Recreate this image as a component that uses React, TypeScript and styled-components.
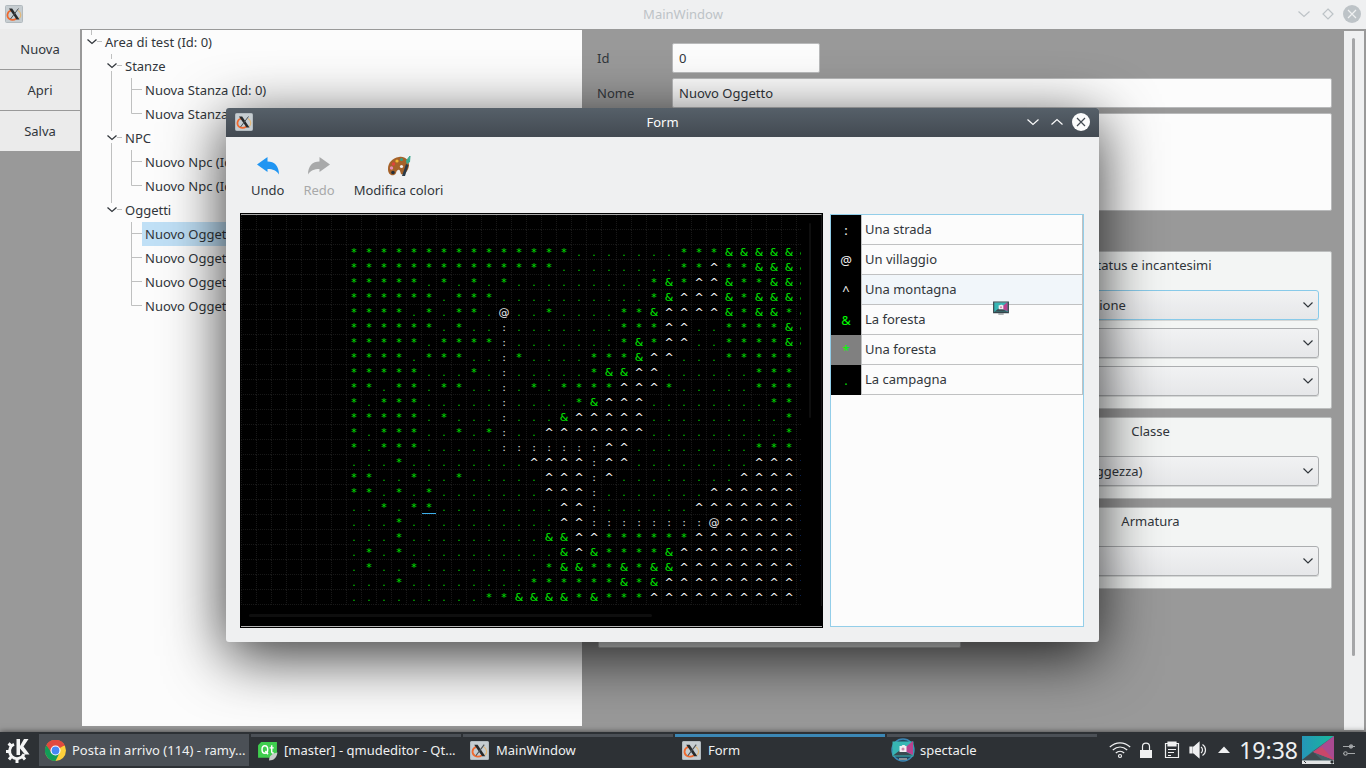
import React from "react";
import styled, { createGlobalStyle, css } from "styled-components";

const GlobalStyle = createGlobalStyle`
  * { box-sizing: border-box; }
  body {
    margin: 0;
    background: #999999;
    color: #31363b;
    font-family: "Noto Sans", sans-serif;
    font-size: 13px;
    line-height: 18px;
  }
  button, input, select, textarea { font: inherit; color: inherit; }
  button { padding: 0; border: 0; background: none; }
`;

const Desktop = styled.div`
  position: relative;
  display: flex;
  flex-direction: column;
  height: 100vh;
  min-height: 700px;
  overflow: hidden;
`;

/* ---------- window frames ---------- */

const TitleBar = styled.header<{ $active?: boolean }>`
  display: grid;
  grid-template-columns: 84px 1fr 84px;
  align-items: center;
  flex: none;
  height: 29px;
  padding: 0 4px 1px;
  color: #bdc3c7;
  background: #eff0f1;
  ${(p) =>
    p.$active &&
    css`
      color: #fcfcfc;
      background: linear-gradient(#566069, #434a52);
      border-radius: 3px 3px 0 0;
    `}
`;

const Title = styled.h1`
  margin: 0;
  font: inherit;
  text-align: center;
`;

const AppIcon = styled.span<{ $active?: boolean }>`
  display: flex;
  padding-left: ${(p) => (p.$active ? 5 : 1)}px;
`;

const WindowButtons = styled.div<{ $active?: boolean }>`
  display: flex;
  justify-content: flex-end;
  align-items: center;
  gap: 6px;
  padding-right: ${(p) => (p.$active ? 5 : 1)}px;
`;

const WindowButton = styled.button`
  display: flex;
  width: 18px;
  height: 18px;
`;

const MainBody = styled.main`
  display: grid;
  grid-template-columns: 82px minmax(0, 500fr) minmax(0, 762fr) 20px;
  flex: 1;
  min-height: 0;
  padding-right: 2px;
  background: #999999;
`;

const SideBar = styled.nav`
  display: flex;
  flex-direction: column;
  gap: 1px;
  padding-right: 2px;
`;

const SideButton = styled.button`
  height: 40px;
  background: #ebebeb;
`;

/* ---------- tree ---------- */

const Tree = styled.ul`
  margin: 1px 0 6px;
  padding: 0;
  list-style: none;
  background: #fcfcfc;
`;

const TreeRow = styled.li`
  display: flex;
  height: 24px;
`;

const TreeLabel = styled.span<{ $selected?: boolean }>`
  flex: 1;
  padding: 3px;
  white-space: nowrap;
  background: ${(p) => (p.$selected ? "#c0e0f6" : "transparent")};
`;

/* ---------- form ---------- */

const FormArea = styled.form`
  padding: 14px 12px 0 15px;
`;

const Field = styled.div`
  display: grid;
  grid-template-columns: 75px 1fr;
  align-items: center;
  margin-bottom: 5px;
`;

const TextInput = styled.input<{ $width?: string }>`
  width: ${(p) => p.$width ?? "100%"};
  height: 30px;
  padding: 0 6px;
  border: 1px solid #b9babb;
  border-radius: 2px;
  background: #fcfcfc;
`;

const TextArea = styled.textarea`
  display: block;
  width: 100%;
  height: 98px;
  border: 1px solid #b9babb;
  border-radius: 2px;
  background: #fcfcfc;
  resize: none;
`;

const Groups = styled.div`
  display: grid;
  grid-template-columns: 1fr 1fr;
  gap: 8px;
  margin: 40px 0 0 1px;
`;

const GroupColumn = styled.div`
  display: flex;
  flex-direction: column;
  gap: 8px;
`;

const Group = styled.section<{ $height?: number }>`
  display: flex;
  flex-direction: column;
  gap: 8px;
  min-height: ${(p) => p.$height ?? 0}px;
  padding: 4px 12px 12px;
  border: 1px solid #bcbebe;
  border-radius: 2px;
  background: #f3f5f4;
`;

const GroupTitle = styled.h2`
  margin: 0 0 8px;
  font: inherit;
  text-align: center;
`;

const ComboWrap = styled.div`
  display: grid;
  align-items: center;
  justify-items: end;
  > * { grid-area: 1 / 1; }
  > svg { margin-right: 4px; pointer-events: none; }
`;

const Combo = styled.select<{ $focus?: boolean }>`
  appearance: none;
  width: 100%;
  height: 30px;
  padding: 0 24px 0 7px;
  border: 1px solid ${(p) => (p.$focus ? "#88cae9" : "#acaeb0")};
  border-radius: 3px;
  background: linear-gradient(#f1f2f3, #e6e7e9);
  box-shadow: 0 1px 0 rgba(0, 0, 0, 0.12);
`;

const ScrollTrack = styled.div`
  margin: 2px 0;
  padding: 7px 9px 74px 8px;
  background: #eff0f1;
`;

const ScrollThumb = styled.div`
  height: 100%;
  border-radius: 2px;
  background: #a5a6a8;
`;

/* ---------- dialog ---------- */

const Dialog = styled.section`
  position: absolute;
  left: 226px;
  top: 108px;
  width: 873px;
  border-radius: 3px;
  background: #eff0f1;
  box-shadow: 0 14px 60px rgba(0, 0, 0, 0.8);
`;

const ToolBar = styled.div`
  display: flex;
  align-items: flex-start;
  gap: 9px;
  height: 76px;
  padding: 17px 20px 0;
`;

const ToolButton = styled.button`
  display: flex;
  flex-direction: column;
  align-items: center;
  gap: 3px;
  padding: 0 5px;
  &:disabled { color: #a8a9aa; }
`;

const DialogBody = styled.div`
  display: grid;
  grid-template-columns: minmax(0, 583fr) minmax(0, 254fr);
  gap: 7px;
  padding: 0 15px 14px 14px;
`;

const MapPanel = styled.div`
  display: grid;
  grid-template-columns: 1fr 21px;
  grid-template-rows: 392px 21px;
  padding: 1px;
  background: #000000;
`;

const MapView = styled.div`
  overflow: hidden;
  border-top: 1px solid #a9a9a9;
`;

const MapRow = styled.div`
  display: flex;
  height: 15px;
`;

const glyphColors: Record<string, string> = {
  "*": "#00e000",
  "&": "#00eb00",
  ".": "#00c800",
  ":": "#e0e0e0",
  "@": "#f0f0f0",
  "^": "#ffffff",
};

const MapCell = styled.span<{ $glyph: string; $current?: boolean }>`
  flex: none;
  width: 15px;
  height: 15px;
  border-left: 1px dotted #181818;
  border-bottom: 1px dotted #181818;
  color: ${(p) => glyphColors[p.$glyph] ?? "transparent"};
  font-family: "DejaVu Sans", sans-serif;
  font-size: 11px;
  line-height: 15px;
  text-align: center;
  box-shadow: ${(p) => (p.$current ? "inset 0 -1px #3daee9" : "none")};
`;

const MapVScroll = styled.div`
  padding: 8px 10px 0 8px;
  border-top: 1px solid #a9a9a9;
  border-right: 1px solid #161616;
  &::before {
    content: "";
    display: block;
    height: 51%;
    border-radius: 2px;
    background: #0e0e0e;
  }
`;

const MapHScroll = styled.div`
  grid-column: 1 / 3;
  padding: 8px 170px 0 8px;
  border-bottom: 1px solid #b4b4b4;
  &::before {
    content: "";
    display: block;
    height: 3px;
    border-radius: 2px;
    background: #0e0e0e;
  }
`;

const LegendPanel = styled.div`
  margin: 1px 0;
  border: 1px solid #93cee9;
  background: #fcfcfc;
`;

const LegendTable = styled.table`
  width: 100%;
  border-collapse: separate;
  border-spacing: 0;
`;

const LegendSymbol = styled.th<{ $glyph: string; $selected?: boolean }>`
  width: 30px;
  height: 30px;
  padding: 0;
  font-weight: 400;
  color: ${(p) => (p.$glyph === "." ? "#00d200" : "*&".includes(p.$glyph) ? "#00ff00" : "#f0f0f0")};
  background: ${(p) => (p.$selected ? "#808080" : "#000000")};
`;

const LegendName = styled.td<{ $hover?: boolean }>`
  height: 30px;
  padding: 0 3px 2px;
  border: solid #c0c1c2;
  border-width: 0 1px 1px;
  background: ${(p) => (p.$hover ? "#f1f6fa" : "#fcfcfc")};
`;

const DragCursor = styled.span`
  position: absolute;
  left: 767px;
  top: 192px;
  display: flex;
`;

/* ---------- task bar ---------- */

const TaskBar = styled.footer`
  display: flex;
  align-items: stretch;
  flex: none;
  height: 36px;
  padding: 2px 6px 2px 4px;
  color: #eff0f1;
  background: #2d3135;
  box-shadow: 0 0 6px rgba(0, 0, 0, 0.6);
`;

const Launcher = styled.button`
  display: flex;
  align-items: center;
  width: 35px;
`;

const TaskList = styled.div`
  display: flex;
  flex: 1;
  gap: 2px;
  min-width: 0;
`;

const Task = styled.button<{ $state?: "attention" | "active" }>`
  display: grid;
  grid-template-columns: 22px minmax(0, 1fr);
  align-items: center;
  flex: 0 1 210px;
  gap: 6px;
  min-width: 0;
  padding-left: 5px;
  border-top: 3px solid ${(p) => (p.$state === "active" ? "#3b87b5" : "#4b5056")};
  border-bottom: 3px solid transparent;
  text-align: left;
  background: ${(p) => (p.$state === "attention" ? "#4b5056" : "transparent")};
  > svg { justify-self: center; }
  > span {
    overflow: hidden;
    white-space: nowrap;
  }
`;

const Tray = styled.div`
  display: flex;
  align-items: center;
  gap: 4px;
  > svg, > button { flex: none; }
`;

const TrayButton = styled.button`
  display: flex;
  width: 22px;
  height: 22px;
`;

const Clock = styled.time`
  font-size: 23px;
  line-height: 32px;
`;

/* ---------- icons ---------- */

const XIcon = ({ size = 18 }: { size?: number }) => (
  <svg width={size} height={size} viewBox="0 0 18 18">
    <rect x="0.5" y="0.5" width="17" height="17" rx="1" fill="#c6cdd1" stroke="#b2babf" />
    <path d="M6 5.500C1.500 7 1.500 12 4.500 14c2 1.200 5 .8 7-.5" fill="none" stroke="#f0692e" strokeWidth="1.700" />
    <path d="M13 5.500c3.500 2 3.500 6.500 1 8" fill="none" stroke="#e3b878" strokeWidth="1.200" />
    <path d="M4 3.500h3.200l7.300 11h-3z" fill="#26292b" />
    <path d="M13.500 3.500L5.500 14" stroke="#4a4f52" strokeWidth="1" />
  </svg>
);

const Chevron = ({ up, color = "#31363b", size = 18 }: { up?: boolean; color?: string; size?: number }) => (
  <svg width={size} height={size} viewBox="0 0 18 18" fill="none" stroke={color} strokeWidth="1.200">
    <path d={up ? "M3.500 11.500l5.500-5 5.500 5" : "M3.500 6.500l5.500 5 5.500-5"} />
  </svg>
);

const ComboArrow = () => (
  <svg width="14" height="14" viewBox="0 0 14 14" fill="none" stroke="#31363b" strokeWidth="1.200">
    <path d="M2.500 4.500l4.500 4.500 4.500-4.500" />
  </svg>
);

const CloseIcon = ({ fill, stroke }: { fill: string; stroke: string }) => (
  <svg width="18" height="18" viewBox="0 0 18 18">
    <circle cx="9" cy="9" r="9" fill={fill} />
    <path d="M5 5l8 8M13 5l-8 8" stroke={stroke} strokeWidth="1.200" />
  </svg>
);

const Diamond = () => (
  <svg width="18" height="18" viewBox="0 0 18 18" fill="none" stroke="#bdc3c7" strokeWidth="1.200">
    <path d="M9 4l5 5-5 5-5-5z" />
  </svg>
);

type BranchKind = "root" | "node" | "lastNode" | "leaf" | "lastLeaf" | "through" | "blank";

const BranchSvg = styled.svg`
  flex: none;
`;

const Branch = ({ kind }: { kind: BranchKind }) => {
  const isNode = kind === "root" || kind === "node" || kind === "lastNode";
  return (
    <BranchSvg width="20" height="24" viewBox="0 0 20 24" fill="none" stroke="#bfc0c0">
      {isNode && <path d="M9.500 0v5M15 11.500h5" />}
      {kind === "node" && <path d="M9.500 17v7" />}
      {kind === "through" && <path d="M9.500 0v24" />}
      {kind === "leaf" && <path d="M9.500 0v24M10 11.500h10" />}
      {kind === "lastLeaf" && <path d="M9.500 0v11.500h10.500" />}
      {isNode && <path d="M5.500 9.500l4.500 4 4.500-4" stroke="#31363b" strokeWidth="1.300" />}
    </BranchSvg>
  );
};

const UndoIcon = ({ color, flip }: { color: string; flip?: boolean }) => (
  <svg width="24" height="24" viewBox="0 0 24 24">
    <path
      transform={flip ? "translate(24 0) scale(-1 1)" : undefined}
      d="M1 10.500L11.500 3v4.500C18.500 7.500 23 12 23 20.500c-2.500-4-6-5.500-11.500-5.500v3z"
      fill={color}
    />
  </svg>
);

const PaletteIcon = () => (
  <svg width="24" height="24" viewBox="0 0 24 24">
    <path d="M12 3C5 4 1 9 1 15c0 5 3 7 6 6 3-.8 1.500-4 4-5 2-.8 2 1.500 3 4 2 2 8-3 8-9 0-5-4-9-10-8z" fill="#a5622a" />
    <circle cx="6" cy="18.500" r="1.800" fill="#26313a" />
    <circle cx="4.500" cy="14" r="1.700" fill="#e98bb4" />
    <circle cx="6.500" cy="10" r="1.700" fill="#e0443c" />
    <circle cx="10" cy="7" r="1.600" fill="#f2b632" />
    <circle cx="14.500" cy="5.500" r="1.500" fill="#37a085" />
    <circle cx="14.500" cy="12.500" r="1.600" fill="#eff0f1" />
    <path d="M15 22l4-12 2.500 1-3.500 11z" fill="#2b3a48" />
    <path d="M19.500 6.500l3.500-4.500-.5 6-2.500 1.500z" fill="#3aaa90" stroke="#3aaa90" />
  </svg>
);

const ScreenIcon = ({ size = 22, ring }: { size?: number; ring?: boolean }) => (
  <svg width={size} height={size} viewBox="0 0 24 24">
    {ring && <circle cx="12" cy="12" r="11" fill="#24475c" stroke="#3b87b5" strokeWidth="1.500" />}
    <path d="M1.500 3.500h21v15h-21z" fill="#37b5b4" />
    <path d="M22 3v14l-11-5z" fill="#b8428e" />
    <path d="M2 17.500l8-6 12 6z" fill="#3a4a50" />
    <path d="M1 3h22v16H1z" fill="none" stroke={ring ? "none" : "#35454b"} strokeWidth="1.800" />
    <path d="M8.500 8h2l1-1h2l1 1h1v6h-7z" fill="#f2eef2" />
    <circle cx="12" cy="11" r="1.500" fill="#c786a9" />
    <path d="M8 20h8v2H8z" fill="#8b9194" />
  </svg>
);

const KdeIcon = () => (
  <svg width="28" height="28" viewBox="0 0 28 28" fill="#f4f5f5" stroke="#f4f5f5">
    <path d="M10 8.200A7.500 7.500 0 1 0 20 18" fill="none" strokeWidth="2.800" />
    <path d="M13 23v4M7.500 20.500L5 23.500M5.500 15.500H2M7.500 10L4.500 7.500M18.500 20.500l2.500 3" strokeWidth="3" />
    <path d="M12.500 3h3.500v7l4-7h4.500l-5 7.500 6 8h-4.500L16 12.500V19h-3.500z" stroke="none" />
  </svg>
);

const ChromeIcon = () => (
  <svg width="21" height="21" viewBox="0 0 20 20">
    <circle cx="10" cy="10" r="10" fill="#fdd03b" />
    <path d="M10 10L1.300 5A10 10 0 0 1 18.700 5z" fill="#e04a3f" />
    <path d="M10 10L1.300 5A10 10 0 0 0 10 20l4-8z" fill="#129d58" />
    <path d="M10 5.500h8.900A10 10 0 0 0 1.300 5L6 12z" fill="#e04a3f" />
    <circle cx="10" cy="10" r="4.800" fill="#ffffff" />
    <circle cx="10" cy="10" r="3.700" fill="#4687f4" />
  </svg>
);

const QtIcon = () => (
  <svg width="21" height="21" viewBox="0 0 20 20">
    <path d="M4 2h15v12l-4 3H1V5z" fill="#3fce4e" />
    <g fill="none" stroke="#ffffff" strokeWidth="1.400">
      <ellipse cx="7.500" cy="9" rx="2.700" ry="3.600" />
      <path d="M8 10.500l2.500 3M14 5v6c0 1.300.8 1.500 2 1.300M12 7.500h4" />
    </g>
    <path d="M19.500 12c-5.500 1-8 3.500-8 7.500 4.500 0 7-2 8-7.500z" fill="#c9cccb" />
  </svg>
);

const WifiIcon = () => (
  <svg width="22" height="22" viewBox="0 0 22 22" fill="none" stroke="#eff0f1" strokeWidth="1.200">
    <path d="M.8 8C7 2.500 15 2.500 21.200 8M3.800 11c4.500-4 10-4 14.400 0M6.800 14c2.500-2.300 6-2.300 8.400 0" />
    <circle cx="11" cy="17" r="1.500" />
  </svg>
);

const LockIcon = () => (
  <svg width="22" height="22" viewBox="0 0 22 22">
    <path d="M5 11h12v8H5z" fill="#eff0f1" />
    <path d="M7.500 11V7.500c0-4.500 7-4.500 7 0V11" fill="none" stroke="#eff0f1" strokeWidth="1.200" />
  </svg>
);

const ClipboardIcon = () => (
  <svg width="22" height="22" viewBox="0 0 22 22" fill="none" stroke="#eff0f1" strokeWidth="1.200">
    <path d="M4.500 4.500h13v14h-13zM7 10.500h8M7 13.500h6M7 16.500h3" />
    <path d="M7 3h8v4H7z" fill="#eff0f1" />
  </svg>
);

const VolumeIcon = () => (
  <svg width="22" height="22" viewBox="0 0 22 22" fill="none" stroke="#eff0f1" strokeWidth="1.200">
    <path d="M3 8h1.500v6H3zM6 8h1l5-4.500v15L7 14H6z" fill="#eff0f1" />
    <path d="M14 8c2 1.500 2 4.500 0 6M15.500 5.500c4 2.500 4 8.500 0 11" />
  </svg>
);

const TriangleIcon = () => (
  <svg width="22" height="22" viewBox="0 0 22 22">
    <path d="M5 14l6-6.500L17 14z" fill="#eff0f1" />
  </svg>
);

const DesktopPreview = () => (
  <svg width="32" height="28" viewBox="0 0 32 28">
    <defs>
      <linearGradient id="sky" x2="1" y2="0">
        <stop offset="0" stopColor="#2596b8" />
        <stop offset="1" stopColor="#18b89a" />
      </linearGradient>
    </defs>
    <path d="M0 0h32v28H0z" fill="#456067" />
    <path d="M0 0h32L11 15 0 24z" fill="url(#sky)" />
    <path d="M32 0v24L11 16z" fill="#a94a91" />
    <path d="M11 16l9-5 12 13z" fill="#c9476a" />
    <path d="M0 24l11-8 9 8z" fill="#3f4c50" />
    <path d="M0 24.500h32V28H0z" fill="#e3e5e6" />
    <path d="M2 25l2 2M29 25h2v2h-2z" stroke="#31363b" />
  </svg>
);

const SlidersIcon = () => (
  <svg width="22" height="22" viewBox="0 0 22 22" fill="none" stroke="#a4a7a9" strokeWidth="1.100">
    <path d="M5 7.500h12M5 14.500h1M9.500 14.500H17" />
    <circle cx="13" cy="7.500" r="1.600" fill="#a4a7a9" />
    <circle cx="7.500" cy="14.500" r="1.700" />
  </svg>
);

/* ---------- data ---------- */

interface TreeItem {
  label: string;
  branches: BranchKind[];
  selected?: boolean;
}

const treeItems: TreeItem[] = [
  { label: "Area di test (Id: 0)", branches: ["root"] },
  { label: "Stanze", branches: ["blank", "node"] },
  { label: "Nuova Stanza (Id: 0)", branches: ["blank", "through", "leaf"] },
  { label: "Nuova Stanza (Id: 1)", branches: ["blank", "through", "lastLeaf"] },
  { label: "NPC", branches: ["blank", "node"] },
  { label: "Nuovo Npc (Id: 0)", branches: ["blank", "through", "leaf"] },
  { label: "Nuovo Npc (Id: 1)", branches: ["blank", "through", "lastLeaf"] },
  { label: "Oggetti", branches: ["blank", "lastNode"] },
  { label: "Nuovo Oggetto (Id: 0)", branches: ["blank", "blank", "leaf"], selected: true },
  { label: "Nuovo Oggetto (Id: 1)", branches: ["blank", "blank", "leaf"] },
  { label: "Nuovo Oggetto (Id: 2)", branches: ["blank", "blank", "leaf"] },
  { label: "Nuovo Oggetto (Id: 3)", branches: ["blank", "blank", "lastLeaf"] },
];

const worldMap = [
  "",
  "",
  "***************.......***&&&&&&",
  "**************........**^**&&&&",
  "*****.*.*.*.........*&*^^&**&&&",
  "******.***..........*&^^^&*&&&&",
  "****.*.**.@..*....**&^^^^&*&&*&",
  "******.*..:.......***^^..****&&",
  "*****.****:.......*&*^^..****&&",
  "****.***..:*....***&^^...*****",
  "*****...*.:.....*&&^^......***",
  "**.**.**..:.*.****^^^*.....***",
  "*.***.....:....*&^^^........**",
  "*****.*...:...&^^^^^.........*",
  "*.***..*.*:..^^^^^^^.........*",
  "*.***.....:::::::^^........***",
  "...*........^^^^:^^........^^^^",
  "**..*..*.....^^^:^........^^^^^",
  "**.*.*.......^^^:.......^^^^^^^",
  "..*.**........^^:......^^^^^^^^",
  "...*..........^^::::::::@^^^^^^",
  "...*.........&&^^******^^^^^^^^",
  ".*.*..........&^&****&^^^^^^^^^",
  ".*..*........*&&**&*&&^^^^^^^^^",
  "...*........******&*&^^^^^^^^^^",
  ".........**&&&&*&***^^^^^^^^^^^",
].map((row) => (" ".repeat(7) + row).padEnd(38).split(""));

const cursor = { row: 19, col: 12 };

const legend = [
  { glyph: ":", name: "Una strada" },
  { glyph: "@", name: "Un villaggio" },
  { glyph: "^", name: "Una montagna", hover: true },
  { glyph: "&", name: "La foresta" },
  { glyph: "*", name: "Una foresta", selected: true },
  { glyph: ".", name: "La campagna" },
];

/* ---------- parts ---------- */

const ComboBox = ({ label, value, focus }: { label: string; value: string; focus?: boolean }) => (
  <ComboWrap>
    <Combo aria-label={label} $focus={focus}>
      <option>{value}</option>
    </Combo>
    <ComboArrow />
  </ComboWrap>
);

const MainWindow = () => (
  <>
    <TitleBar>
      <AppIcon><XIcon /></AppIcon>
      <Title>MainWindow</Title>
      <WindowButtons>
        <WindowButton aria-label="Riduci"><Chevron color="#bdc3c7" /></WindowButton>
        <WindowButton aria-label="Ripristina"><Diamond /></WindowButton>
        <WindowButton aria-label="Chiudi"><CloseIcon fill="#bdc3c7" stroke="#eff0f1" /></WindowButton>
      </WindowButtons>
    </TitleBar>
    <MainBody>
      <SideBar>
        <SideButton>Nuova</SideButton>
        <SideButton>Apri</SideButton>
        <SideButton>Salva</SideButton>
      </SideBar>
      <Tree>
        {treeItems.map((item) => (
          <TreeRow key={item.label}>
            {item.branches.map((kind, i) => <Branch key={i} kind={kind} />)}
            <TreeLabel $selected={item.selected}>{item.label}</TreeLabel>
          </TreeRow>
        ))}
      </Tree>
      <FormArea>
        <Field>
          <label htmlFor="id">Id</label>
          <TextInput id="id" $width="148px" defaultValue="0" />
        </Field>
        <Field>
          <label htmlFor="nome">Nome</label>
          <TextInput id="nome" defaultValue="Nuovo Oggetto" />
        </Field>
        <Field>
          <span />
          <TextArea aria-label="Descrizione" />
        </Field>
        <Groups>
          <Group $height={397} />
          <GroupColumn>
            <Group>
              <GroupTitle>Status e incantesimi</GroupTitle>
              <ComboBox label="Status" value="Nessuna dominazione" focus />
              <ComboBox label="Incantesimo 1" value="" />
              <ComboBox label="Incantesimo 2" value="" />
            </Group>
            <Group>
              <GroupTitle>Classe</GroupTitle>
              <ComboBox label="Classe" value="Guerriero (usa Saggezza)" />
            </Group>
            <Group>
              <GroupTitle>Armatura</GroupTitle>
              <ComboBox label="Armatura" value="" />
            </Group>
          </GroupColumn>
        </Groups>
      </FormArea>
      <ScrollTrack><ScrollThumb /></ScrollTrack>
    </MainBody>
  </>
);

const MapDialog = () => (
  <Dialog>
    <TitleBar $active>
      <AppIcon $active><XIcon /></AppIcon>
      <Title>Form</Title>
      <WindowButtons $active>
        <WindowButton aria-label="Riduci"><Chevron color="#fcfcfc" /></WindowButton>
        <WindowButton aria-label="Ingrandisci"><Chevron up color="#fcfcfc" /></WindowButton>
        <WindowButton aria-label="Chiudi"><CloseIcon fill="#fcfcfc" stroke="#434a52" /></WindowButton>
      </WindowButtons>
    </TitleBar>
    <ToolBar>
      <ToolButton><UndoIcon color="#2095f2" />Undo</ToolButton>
      <ToolButton disabled><UndoIcon color="#a8a9aa" flip />Redo</ToolButton>
      <ToolButton><PaletteIcon />Modifica colori</ToolButton>
    </ToolBar>
    <DialogBody>
      <MapPanel>
        <MapView>
          {worldMap.map((row, r) => (
            <MapRow key={r}>
              {row.map((glyph, c) => (
                <MapCell key={c} $glyph={glyph} $current={r === cursor.row && c === cursor.col}>
                  {glyph}
                </MapCell>
              ))}
            </MapRow>
          ))}
        </MapView>
        <MapVScroll />
        <MapHScroll />
      </MapPanel>
      <LegendPanel>
        <LegendTable>
          <tbody>
            {legend.map((entry) => (
              <tr key={entry.glyph}>
                <LegendSymbol $glyph={entry.glyph} $selected={entry.selected}>{entry.glyph}</LegendSymbol>
                <LegendName $hover={entry.hover}>{entry.name}</LegendName>
              </tr>
            ))}
          </tbody>
        </LegendTable>
      </LegendPanel>
    </DialogBody>
    <DragCursor><ScreenIcon size={16} /></DragCursor>
  </Dialog>
);

export default function App() {
  return (
    <Desktop>
      <GlobalStyle />
      <MainWindow />
      <MapDialog />
      <TaskBar>
        <Launcher aria-label="Menu"><KdeIcon /></Launcher>
        <TaskList>
          <Task $state="attention"><ChromeIcon /><span>Posta in arrivo (114) - ramy...</span></Task>
          <Task><QtIcon /><span>[master] - qmudeditor - Qt...</span></Task>
          <Task><XIcon size={19} /><span>MainWindow</span></Task>
          <Task $state="active"><XIcon size={19} /><span>Form</span></Task>
          <Task><ScreenIcon size={24} ring /><span>spectacle</span></Task>
        </TaskList>
        <Tray>
          <TrayButton aria-label="Rete"><WifiIcon /></TrayButton>
          <TrayButton aria-label="Blocco"><LockIcon /></TrayButton>
          <TrayButton aria-label="Appunti"><ClipboardIcon /></TrayButton>
          <TrayButton aria-label="Volume"><VolumeIcon /></TrayButton>
          <TrayButton aria-label="Altre icone"><TriangleIcon /></TrayButton>
          <Clock>19:38</Clock>
          <DesktopPreview />
          <TrayButton aria-label="Impostazioni"><SlidersIcon /></TrayButton>
        </Tray>
      </TaskBar>
    </Desktop>
  );
}
